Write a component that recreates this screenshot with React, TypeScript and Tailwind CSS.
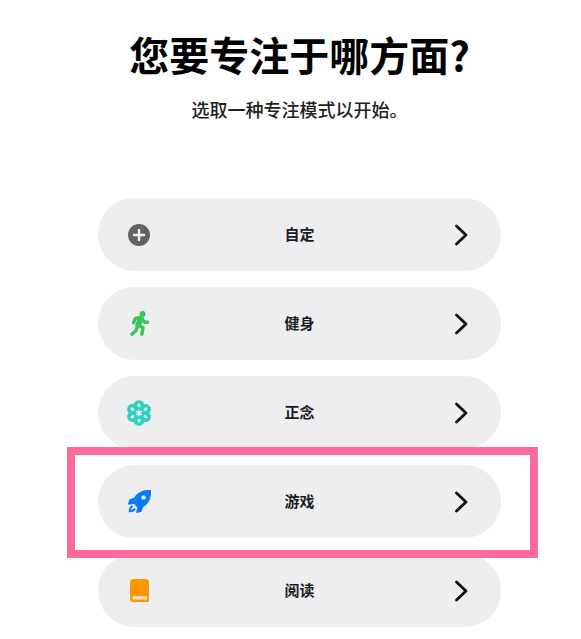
import { ReactNode } from "react"

const PlusIcon = () => (
  <svg width="22" height="22" viewBox="0 0 22 22">
    <circle cx="11" cy="11" r="11" fill="#636366" />
    <path d="M11 6v10M6 11h10" stroke="#f2f2f4" strokeWidth="2.4" strokeLinecap="round" />
  </svg>
)

const RunnerIcon = () => (
  <svg width="19" height="25" viewBox="0 0 19 25" fill="none" stroke="#34c759" strokeLinecap="round" strokeLinejoin="round">
    <circle cx="12.6" cy="2.9" r="2.9" fill="#34c759" stroke="none" />
    <path d="M11 7.5L8 14" strokeWidth="5.4" />
    <path d="M10.5 6.5L5.5 7.5L3.6 11.5M12 8l2.6 3.2h3M8 14l5 2.8-1.2 6.4M8 14l-2 5.4L1.8 23.2" strokeWidth="3.4" />
  </svg>
)

const flowerAngles = [0, 60, 120, 180, 240, 300]

const FlowerIcon = () => (
  <svg width="26" height="26" viewBox="-13 -13 26 26">
    {flowerAngles.map((a) => (
      <g key={a} transform={`rotate(${a})`}>
        <circle cx="0" cy="-7.4" r="5.4" fill="#2fcfbd" />
      </g>
    ))}
    {flowerAngles.map((a) => (
      <g key={a} transform={`rotate(${a})`}>
        <ellipse cx="0" cy="-7.6" rx="1.6" ry="2.1" fill="#d6f3ef" />
        <ellipse cx="0" cy="-2.6" rx="0.7" ry="1.2" fill="#d6f3ef" />
      </g>
    ))}
  </svg>
)

const RocketIcon = () => (
  <svg width="23" height="23" viewBox="0 0 23 23">
    <path
      d="M22.5 0.5C15 0.5 9 3.5 6.5 8.5L2 10L0.8 14L6 13L10 17L9 22.2L13 21L14.5 16.5C19.5 14 22.5 8 22.5 0.5z"
      fill="#0a7aff"
      stroke="#0a7aff"
      strokeWidth="1.5"
      strokeLinejoin="round"
    />
    <circle cx="15.6" cy="7.4" r="2.2" fill="#e6eefb" />
    <path d="M4.5 16C2.5 17 1.8 18.8 1.8 21.2C4.2 21.2 6 20.5 7 18.5" fill="none" stroke="#0a7aff" strokeWidth="2" />
  </svg>
)

const BookIcon = () => (
  <svg width="19" height="23" viewBox="0 0 19 23">
    <path d="M3.5 0H16a3 3 0 0 1 3 3v18.5a1.5 1.5 0 0 1-1.5 1.5H3.5A3.5 3.5 0 0 1 0 19.5v-16A3.5 3.5 0 0 1 3.5 0z" fill="#ff9500" />
    <path d="M4 17.2H17V20.6H4A1.7 1.7 0 0 1 4 17.2z" fill="#ffe9cc" />
  </svg>
)

const Chevron = () => (
  <svg width="14" height="22" viewBox="0 0 14 22" fill="none">
    <path d="M2.5 2l9.5 9-9.5 9" stroke="#111" strokeWidth="2.8" strokeLinecap="round" strokeLinejoin="round" />
  </svg>
)

const rows: { label: string; icon: ReactNode }[] = [
  { label: "自定", icon: <PlusIcon /> },
  { label: "健身", icon: <RunnerIcon /> },
  { label: "正念", icon: <FlowerIcon /> },
  { label: "游戏", icon: <RocketIcon /> },
  { label: "阅读", icon: <BookIcon /> },
]

export default function App() {
  return (
    <div className="relative h-[639px] w-[581px] overflow-hidden bg-white font-['Noto_Sans_CJK_SC',sans-serif] text-black">
      <div className="ml-[98px] flex w-[403px] flex-col">
        <h1 className="mt-[28px] whitespace-nowrap text-center text-[40px] leading-[52px] font-semibold">您要专注于哪方面?</h1>
        <p className="mt-[17px] text-center text-[18px] leading-6 font-medium text-[#222]">选取一种专注模式以开始。</p>
        <div className="mt-[77px] flex flex-col gap-4">
          {rows.map((row) => (
            <div key={row.label} className="flex h-[73px] items-center rounded-[37px] bg-[#eeeef0]">
              <div className="flex w-[82px] justify-center">{row.icon}</div>
              <div className="flex-1 text-center text-[15px] font-bold text-[#1c1c1e]">{row.label}</div>
              <div className="flex w-[82px] justify-center pl-[2px]">
                <Chevron />
              </div>
            </div>
          ))}
        </div>
      </div>
      <div className="absolute top-[447px] left-[67px] h-[111px] w-[471px] border-8 border-[#ff6b98]" />
    </div>
  )
}
